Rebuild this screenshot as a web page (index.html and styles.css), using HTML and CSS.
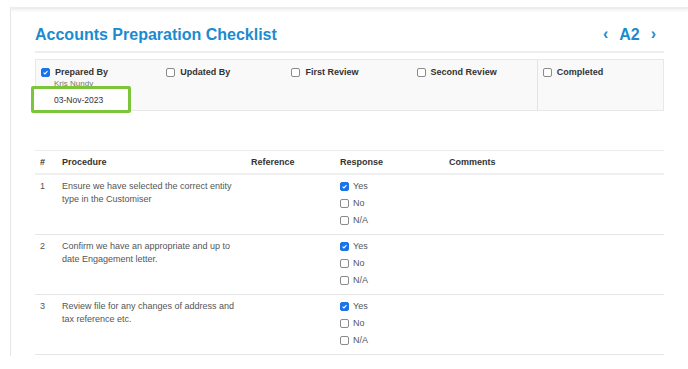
FILE: index.html
```html
<!DOCTYPE html>
<html>
<head>
<meta charset="utf-8">
<link rel="stylesheet" href="styles.css">
</head>
<body>
<div class="topbar"></div>
<div class="card">
  <div class="header">
    <h1 class="title">Accounts Preparation Checklist</h1>
    <div class="pager">
      <span class="chev">&#8249;</span>
      <span class="code">A2</span>
      <span class="chev">&#8250;</span>
    </div>
  </div>

  <div class="signoff">
    <div class="sign-col">
      <div class="sign-label"><span class="cb checked"><svg viewBox="0 0 10 10"><path d="M2.3 5.2 L4.2 7.1 L7.8 3" fill="none" stroke="#fff" stroke-width="1.5"/></svg></span>Prepared By</div>
      <div class="sign-name">Kris Nundy</div>
      <div class="date-box">03-Nov-2023</div>
    </div>
    <div class="sign-col">
      <div class="sign-label"><span class="cb"></span>Updated By</div>
    </div>
    <div class="sign-col">
      <div class="sign-label"><span class="cb"></span>First Review</div>
    </div>
    <div class="sign-col">
      <div class="sign-label"><span class="cb"></span>Second Review</div>
    </div>
    <div class="sign-col last">
      <div class="sign-label"><span class="cb"></span>Completed</div>
    </div>
  </div>

  <div class="table">
    <div class="row head">
      <div class="c num">#</div>
      <div class="c">Procedure</div>
      <div class="c">Reference</div>
      <div class="c">Response</div>
      <div class="c">Comments</div>
    </div>
    <div class="row">
      <div class="c num">1</div>
      <div class="c proc">Ensure we have selected the correct entity type in the Customiser</div>
      <div class="c"></div>
      <div class="c resp">
        <div class="opt"><span class="cb checked"><svg viewBox="0 0 10 10"><path d="M2.3 5.2 L4.2 7.1 L7.8 3" fill="none" stroke="#fff" stroke-width="1.5"/></svg></span>Yes</div>
        <div class="opt"><span class="cb"></span>No</div>
        <div class="opt"><span class="cb"></span>N/A</div>
      </div>
      <div class="c"></div>
    </div>
    <div class="row">
      <div class="c num">2</div>
      <div class="c proc">Confirm we have an appropriate and up to date Engagement letter.</div>
      <div class="c"></div>
      <div class="c resp">
        <div class="opt"><span class="cb checked"><svg viewBox="0 0 10 10"><path d="M2.3 5.2 L4.2 7.1 L7.8 3" fill="none" stroke="#fff" stroke-width="1.5"/></svg></span>Yes</div>
        <div class="opt"><span class="cb"></span>No</div>
        <div class="opt"><span class="cb"></span>N/A</div>
      </div>
      <div class="c"></div>
    </div>
    <div class="row">
      <div class="c num">3</div>
      <div class="c proc">Review file for any changes of address and tax reference etc.</div>
      <div class="c"></div>
      <div class="c resp">
        <div class="opt"><span class="cb checked"><svg viewBox="0 0 10 10"><path d="M2.3 5.2 L4.2 7.1 L7.8 3" fill="none" stroke="#fff" stroke-width="1.5"/></svg></span>Yes</div>
        <div class="opt"><span class="cb"></span>No</div>
        <div class="opt"><span class="cb"></span>N/A</div>
      </div>
      <div class="c"></div>
    </div>
  </div>
</div>
</body>
</html>
```

FILE: styles.css
```css
* { box-sizing: border-box; }
html, body { margin: 0; padding: 0; background: #fff; }
body {
  font-family: "Liberation Sans", Arial, sans-serif;
  color: #333;
  width: 688px;
  height: 369px;
  overflow: hidden;
}
.topbar {
  margin-left: 10px;
  height: 9px;
  border-bottom: 2px solid #ececec;
  box-shadow: 0 2px 3px rgba(0,0,0,0.05);
}
.card {
  margin-left: 10px;
  border-left: 1px solid #e6e6e6;
  padding: 0 24px 14px 24px;
  height: 347px;
}
.header {
  display: flex;
  align-items: center;
  justify-content: space-between;
  height: 44px;
  padding-top: 10px;
  border-bottom: 2px solid #eeeeee;
}
.title {
  margin: 0;
  font-size: 16px;
  font-weight: bold;
  color: #1b8bd0;
}
.pager {
  display: flex;
  align-items: center;
  gap: 11px;
  color: #1b8bd0;
  font-weight: bold;
  padding-right: 8px;
}
.chev { font-size: 16px; line-height: 1; margin-top: -2px; }
.code { font-size: 16px; }

.signoff {
  margin-top: 6px;
  display: flex;
  height: 52px;
  background: #f9f9f9;
  border: 1px solid #e8e8e8;
  position: relative;
}
.sign-col {
  flex: 1;
  padding: 7px 0 0 5px;
  position: relative;
}
.sign-col:nth-child(4) { border-right: 1px solid #e3e3e3; }
.sign-label {
  display: flex;
  align-items: center;
  font-size: 9px;
  font-weight: bold;
  color: #333;
  height: 10px;
}
.sign-label .cb { margin-right: 5px; }
.sign-name {
  font-size: 8px;
  color: #777;
  margin: 2px 0 0 13px;
}
.date-box {
  position: absolute;
  left: -5px;
  top: 26px;
  width: 100px;
  height: 27px;
  border: 3px solid #7cc43a;
  border-radius: 2px;
  background: #fff;
  font-size: 8.5px;
  color: #333;
  padding: 6px 0 0 20px;
}

.cb {
  display: inline-block;
  width: 9px;
  height: 9px;
  border: 1px solid #8a8a8a;
  border-radius: 2px;
  background: #fff;
  flex: none;
}
.cb.checked {
  background: #1a73e8;
  border-color: #1a73e8;
}
.cb svg { display: block; width: 100%; height: 100%; }

.table {
  margin-top: 39px;
  border-top: 1px solid #ececec;
}
.row {
  display: grid;
  grid-template-columns: 22px 189px 89px 109px 1fr;
  border-bottom: 1px solid #e6e6e6;
  height: 60px;
  font-size: 9px;
  color: #555;
}
.row.head {
  height: 24px;
  border-bottom: 2px solid #efefef;
  font-weight: bold;
  color: #333;
  align-items: center;
}
.c { padding-left: 5px; }
.row:not(.head) .c { padding-top: 5px; line-height: 13px; }
.proc { padding-right: 6px; }
.row:not(.head) .resp { padding-top: 3px; }
.opt {
  display: flex;
  align-items: center;
  height: 17px;
}
.opt .cb { margin-right: 4px; }
```
